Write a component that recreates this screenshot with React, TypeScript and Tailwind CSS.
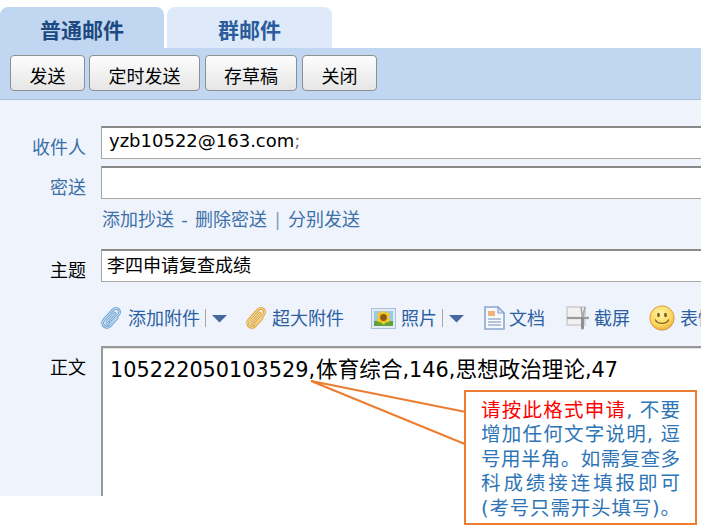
import React from 'react';

const cjk = "font-['DejaVu_Sans','Noto_Sans_CJK_SC',sans-serif]";

const clipPath = 'M14 7L6.5 15.5c-1.6 1.8.9 4 2.6 2.2L17.5 8.5c3.2-3.6-2-8.5-5.4-4.8L2.8 14c-3.6 4.2 2.4 10.2 6.4 5.8L16 12';

const Clip = ({ light, dark }: { light: string; dark: string }) => (
  <svg width="21" height="24" viewBox="0 0 21 24" fill="none" className="shrink-0">
    <path d={clipPath} stroke={dark} strokeWidth="3" strokeLinecap="round" strokeLinejoin="round" />
    <path d={clipPath} stroke={light} strokeWidth="1.2" strokeLinecap="round" strokeLinejoin="round" />
  </svg>
);

const Caret = () => (
  <svg width="15" height="9" viewBox="0 0 15 9" className="shrink-0">
    <path d="M0 1h15L7.5 8.5z" fill="#44689f" />
  </svg>
);

const Photo = () => (
  <svg width="25" height="21" viewBox="0 0 25 21" className="shrink-0">
    <rect x="0.5" y="0.5" width="24" height="20" fill="#e3ebf7" stroke="#a9bfdb" />
    <rect x="3" y="3" width="19" height="15" fill="#9cc8e8" />
    <rect x="3" y="13" width="19" height="5" fill="#5fa23a" />
    <circle cx="8.5" cy="7" r="2.4" fill="#f6c81e" />
    <circle cx="16.5" cy="7" r="2.4" fill="#f6c81e" />
    <circle cx="8.5" cy="12" r="2.4" fill="#f6c81e" />
    <circle cx="16.5" cy="12" r="2.4" fill="#f6c81e" />
    <circle cx="12.5" cy="5.5" r="2.4" fill="#f6c81e" />
    <circle cx="12.5" cy="14" r="2.4" fill="#f6c81e" />
    <circle cx="12.5" cy="9.5" r="3.4" fill="#8a5a16" />
  </svg>
);

const Doc = () => (
  <svg width="21" height="24" viewBox="0 0 21 24" className="shrink-0">
    <path d="M1 1h13l6 6v16H1z" fill="#f4f7fc" stroke="#8aa6ce" strokeWidth="1.6" />
    <path d="M14 1v6h6z" fill="#dbe5f4" stroke="#8aa6ce" strokeWidth="1.2" />
    <rect x="4" y="5" width="7" height="5" fill="#f3b27a" />
    <path d="M4 13h13M4 16h13M4 19h13" stroke="#9fb4d3" strokeWidth="1.3" />
  </svg>
);

const Cut = () => (
  <svg width="24" height="24" viewBox="0 0 24 24" fill="none" className="shrink-0">
    <rect x="1" y="1" width="18" height="18" fill="#f1f1f1" stroke="#cfcfcf" strokeWidth="1.6" />
    <path d="M1 12h22" stroke="#9b9b9b" strokeWidth="2.2" />
    <path d="M15 1l1.5 11M19 1l-2.5 11" stroke="#a5a5a5" strokeWidth="1.6" />
    <path d="M16.5 12v10" stroke="#8f8f8f" strokeWidth="3" strokeLinecap="round" />
  </svg>
);

const Smile = () => (
  <svg width="26" height="26" viewBox="0 0 26 26" className="shrink-0">
    <defs>
      <radialGradient id="smile" cx="45%" cy="35%" r="70%">
        <stop offset="0%" stopColor="#fff6a8" />
        <stop offset="65%" stopColor="#fbd65c" />
        <stop offset="100%" stopColor="#e6a33c" />
      </radialGradient>
    </defs>
    <circle cx="13" cy="13" r="12.2" fill="url(#smile)" stroke="#d9a04a" />
    <ellipse cx="9.5" cy="10" rx="1.4" ry="2.2" fill="#7a5a22" />
    <ellipse cx="16.5" cy="10" rx="1.4" ry="2.2" fill="#7a5a22" />
    <path d="M6.5 15c2 4.5 11 4.5 13 0" fill="none" stroke="#8a6426" strokeWidth="1.4" strokeLinecap="round" />
  </svg>
);

const Btn = ({ label, w }: { label: string; w: string }) => (
  <button className={`h-9 ${w} shrink-0 rounded-[4px] border border-[#8f8f8f] bg-gradient-to-b from-[#fdfdfd] to-[#e6e6e6] pt-[7px] text-[18px] leading-none text-black`}>
    {label}
  </button>
);

const Row = ({ label, black, children }: { label: string; black?: boolean; children: React.ReactNode }) => (
  <div className="flex">
    <div className={`h-[33px] w-[86px] shrink-0 pt-[10px] text-right text-[18px] leading-[23px] ${black ? 'text-black' : 'text-[#3b6ea8]'}`}>{label}</div>
    <div className="ml-[15px]">{children}</div>
  </div>
);

const Field = ({ children }: { children?: React.ReactNode }) => (
  <div className="flex h-[33px] w-[640px] items-center border border-[#a8a8a8] border-t-2 border-t-[#8a8a8a] bg-white pl-[6px] text-black">
    {children}
  </div>
);

const Line = ({ children }: { children: React.ReactNode }) => (
  <div className="w-[199px] text-justify [text-align-last:justify]">{children}</div>
);

export default function App() {
  return (
    <div className={`relative h-[525px] w-[701px] overflow-hidden bg-white ${cjk}`}>
      {/* tabs */}
      <div className="flex gap-[3px] pt-[7px]">
        <div className="flex h-[41px] w-[164px] items-center justify-center rounded-t-[8px] bg-[#c1d7f1] pt-[8px] text-[21px] font-bold text-[#1c4a80]">
          普通邮件
        </div>
        <div className="flex h-[41px] w-[165px] items-center justify-center rounded-t-[8px] bg-[#deeafa] pt-[8px] text-[21px] font-bold text-[#2c5c9b]">
          群邮件
        </div>
      </div>

      {/* toolbar */}
      <div className="flex h-[52px] border-b border-[#a9bfd9] bg-[#c1d7f1] pl-[10px] pt-[7px]">
        <Btn label="发送" w="w-[75px]" />
        <div className="ml-1">
          <Btn label="定时发送" w="w-[111px]" />
        </div>
        <div className="ml-[5px]">
          <Btn label="存草稿" w="w-[92px]" />
        </div>
        <div className="ml-[5px]">
          <Btn label="关闭" w="w-[75px]" />
        </div>
      </div>

      {/* form */}
      <div className="flex h-[396px] flex-col overflow-hidden bg-[#eff4fc] pt-[26px]">
        <Row label="收件人">
          <Field>
            <span className="mb-[4px] ml-[1px] text-[18px] leading-none">
              yzb10522@163.com<span className="text-[#777]">;</span>
            </span>
          </Field>
        </Row>
        <div className="mt-[7px]">
          <Row label="密送">
            <Field />
          </Row>
        </div>
        <div className="ml-[102px] mt-[8px] flex text-[18px] leading-[26px] text-[#3d70a8]">
          <span>添加抄送</span>
          <span className="w-[21px] text-center">-</span>
          <span>删除密送</span>
          <span className="w-[21px] text-center text-[#7f9fc4]">|</span>
          <span>分别发送</span>
        </div>
        <div className="mt-[16px]">
          <Row label="主题" black>
            <Field>
              <span className="-ml-[1px] text-[18px] leading-none">李四申请复查成绩</span>
            </Field>
          </Row>
        </div>

        {/* attachment bar */}
        <div className="ml-[101px] mt-[23px] flex h-[26px] w-[640px] items-center text-[18px] text-[#2d5fa3]">
          <Clip light="#bcd8f0" dark="#6b9fd2" />
          <span className="ml-[6px]">添加附件</span>
          <span className="mx-[5px] h-[18px] w-px bg-[#a8a8a8]" />
          <span className="ml-[1px]" />
          <Caret />
          <span className="ml-[19px]" />
          <Clip light="#f6d68c" dark="#d99f3a" />
          <span className="ml-[5px]">超大附件</span>
          <span className="ml-[27px]" />
          <Photo />
          <span className="ml-[5px]">照片</span>
          <span className="mx-[5px] h-[18px] w-px bg-[#a8a8a8]" />
          <span className="ml-[1px]" />
          <Caret />
          <span className="ml-[20px]" />
          <Doc />
          <span className="ml-[4px]">文档</span>
          <span className="ml-[21px]" />
          <Cut />
          <span className="ml-[4px]">截屏</span>
          <span className="ml-[19px]" />
          <Smile />
          <span className="ml-[5px]">表情</span>
        </div>

        {/* body */}
        <div className="mt-[15px]">
          <Row label="正文" black>
            <div className="h-[160px] w-[640px] border-2 border-r-0 border-b-0 border-[#999] bg-white pl-[7px] pt-[7px] text-[20.8px] leading-[30px] text-black shadow-[inset_0_1px_0_#dedede]">
              105222050103529,<span className="ml-[1px] text-[21.6px]">体育综合</span>,146,<span className="text-[21.6px]">思想政治理论</span>,47
            </div>
          </Row>
        </div>
      </div>

      {/* callout pointer */}
      <svg className="absolute left-0 top-0 h-[525px] w-[701px]" viewBox="0 0 701 525" fill="none">
        <path d="M311 381L466 412M311 381L466 444.5" stroke="#ed7d31" strokeWidth="2" />
      </svg>

      {/* callout */}
      <div className="absolute left-[464px] top-[390px] h-[135px] w-[233px] border-2 border-[#ed7d31] bg-white pl-[15px] pt-[7px] text-[19.5px] leading-[24.4px] text-[#2e75b6]">
        <Line>
          <span className="text-[#ff0000]">请按此格式申请</span>, 不要
        </Line>
        <Line>增加任何文字说明, 逗</Line>
        <Line>号用半角。如需复查多</Line>
        <Line>科成绩接连填报即可</Line>
        <Line>(考号只需开头填写)。</Line>
      </div>
    </div>
  );
}
